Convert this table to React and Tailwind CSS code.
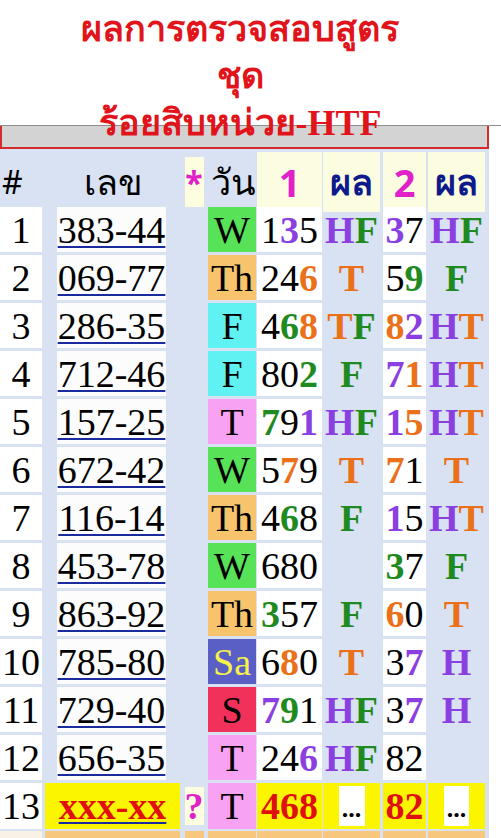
import React from "react";

// colour keys for digits / letters
const C = {
  k: "text-black",
  p: "text-[#8a3fe0]",
  g: "text-[#1f8a1f]",
  o: "text-[#ea7019]",
};

const DAY = {
  W: "bg-[#58e258] text-black",
  Th: "bg-[#f7c36c] text-black",
  F: "bg-[#60f2f2] text-black",
  T: "bg-[#f8a2f3] text-black",
  Sa: "bg-[#5a5fc6] text-[#f6f24a]",
  S: "bg-[#f2315a] text-black",
};

// each coloured text given as [char, colourKey] pairs
const rows = [
  { n: 1, num: "383-44", day: "W", a: "1k3p5k", r1: "HpFg", b: "3p7k", r2: "HpFg" },
  { n: 2, num: "069-77", day: "Th", a: "2k4k6o", r1: "To", b: "5k9g", r2: "Fg" },
  { n: 3, num: "286-35", day: "F", a: "4k6g8o", r1: "ToFg", b: "8o2p", r2: "HpTo" },
  { n: 4, num: "712-46", day: "F", a: "8k0k2g", r1: "Fg", b: "7p1o", r2: "HpTo" },
  { n: 5, num: "157-25", day: "T", a: "7g9k1p", r1: "HpFg", b: "1p5o", r2: "HpTo" },
  { n: 6, num: "672-42", day: "W", a: "5k7o9k", r1: "To", b: "7o1k", r2: "To" },
  { n: 7, num: "116-14", day: "Th", a: "4k6g8k", r1: "Fg", b: "1p5k", r2: "HpTo" },
  { n: 8, num: "453-78", day: "W", a: "6k8k0k", r1: "", b: "3g7k", r2: "Fg" },
  { n: 9, num: "863-92", day: "Th", a: "3g5k7k", r1: "Fg", b: "6o0k", r2: "To" },
  { n: 10, num: "785-80", day: "Sa", a: "6k8o0k", r1: "To", b: "3k7p", r2: "Hp" },
  { n: 11, num: "729-40", day: "S", a: "7p9g1k", r1: "HpFg", b: "3k7p", r2: "Hp" },
  { n: 12, num: "656-35", day: "T", a: "2k4k6p", r1: "HpFg", b: "8k2k", r2: "" },
];

const Colored = ({ spec, bold }) => {
  const parts = [];
  for (let i = 0; i < spec.length; i += 2) {
    parts.push(
      <span key={i} className={`${C[spec[i + 1]]} ${bold || spec[i + 1] !== "k" ? "font-bold" : ""}`}>
        {spec[i]}
      </span>
    );
  }
  return <>{parts}</>;
};

const serif = "font-['Liberation_Serif','DejaVu_Serif',serif]";
const thai = "font-['Noto_Sans','DejaVu_Sans',sans-serif]";

const grid = "grid grid-cols-[45px_137px_24px_51px_66px_59px_45px_62px]";

const App = () => {
  return (
    <div className="h-[838px] w-[501px] overflow-hidden bg-white">
      {/* title */}
      <div
        className={`relative z-10 w-[480px] pt-[6px] text-center text-[36px] font-bold leading-[47px] text-[#e0141a] ${serif}`}
      >
        <div>ผลการตรวจสอบสูตร</div>
        <div>ชุด</div>
        <div>ร้อยสิบหน่วย-HTF</div>
      </div>

      {/* grey bar */}
      <div className="-mt-[22px] border-t border-[#8e8e8e]">
        <div className="h-[23px] w-[489px] border-x-2 border-b-2 border-[#d42a2a] bg-[#d3d3d3]" />
      </div>

      {/* table */}
      <div className="flex w-[489px] flex-col gap-[3px] bg-[#d9e2f3] pb-4 pt-[3px]">
        {/* header */}
        <div className={`${grid} h-[52px]`}>
          <div className={`flex items-center pl-[2px] text-[32px] text-black ${thai}`}>#</div>
          <div className={`flex items-center justify-center text-[36px] text-black ${thai}`}>เลข</div>
          <div className="flex items-center justify-center py-[5px]">
            <div className={`flex h-full w-[19px] items-start justify-center bg-[#fdfde0] pt-[2px] text-[32px] font-bold text-[#e020c8] ${thai}`}>
              *
            </div>
          </div>
          <div className={`flex items-center justify-center pl-[4px] text-[36px] text-black ${thai}`}>วัน</div>
          <div className={`flex w-[65px] items-center justify-center bg-[#fcfce0] text-[38px] font-bold text-[#e020c8] ${thai}`}>
            1
          </div>
          <div className={`flex w-[57px] items-center justify-center bg-[#fcfce0] text-[36px] font-bold text-[#0d1a8c] ${thai}`}>
            ผล
          </div>
          <div className={`ml-[1px] flex w-[43px] items-center justify-center bg-[#fcfce0] text-[38px] font-bold text-[#e020c8] ${thai}`}>
            2
          </div>
          <div className={`ml-[1px] flex w-[57px] items-center justify-center bg-[#fcfce0] text-[36px] font-bold text-[#0d1a8c] ${thai}`}>
            ผล
          </div>
        </div>

        {rows.map((r) => (
          <div key={r.n} className={`${grid} h-[45px] text-[38px] leading-none ${serif}`}>
            <div className="flex w-[42px] items-center justify-center bg-white">{r.n}</div>
            <div className="ml-[12px] flex w-[109px] items-center justify-center bg-[#fcfcfc]">
              <span className="underline decoration-[#1b2b9e] decoration-2 underline-offset-[3px]">{r.num}</span>
            </div>
            <div />
            <div className={`ml-[2px] flex w-[48px] items-center justify-center ${DAY[r.day]}`}>{r.day}</div>
            <div className="flex w-[65px] items-center justify-center bg-white">
              <Colored spec={r.a} />
            </div>
            <div className="flex w-[57px] items-center justify-center">
              <Colored spec={r.r1} bold />
            </div>
            <div className="ml-[1px] flex w-[43px] items-center justify-center bg-white">
              <Colored spec={r.b} />
            </div>
            <div className="ml-[1px] flex w-[57px] items-center justify-center">
              <Colored spec={r.r2} bold />
            </div>
          </div>
        ))}

        {/* row 13 - pending */}
        <div className={`${grid} h-[45px] text-[38px] leading-none ${serif}`}>
          <div className="flex w-[42px] items-center justify-center bg-white">13</div>
          <div className="flex w-[135px] items-center justify-center bg-[#fbf600]">
            <span className="font-bold text-[#e01010] underline decoration-[#1b2b9e] decoration-2 underline-offset-[3px]">
              xxx-xx
            </span>
          </div>
          <div className="flex items-center justify-center py-[4px]">
            <div className="flex h-full w-[19px] items-center justify-center bg-[#fdfde0] text-[38px] font-bold text-[#e020c8]">
              ?
            </div>
          </div>
          <div className={`ml-[2px] flex w-[48px] items-center justify-center ${DAY.T}`}>T</div>
          <div className="flex w-[65px] items-center justify-center bg-[#fbf600] font-bold text-[#e01010]">468</div>
          <div className="flex w-[57px] items-center justify-center bg-[#fbf600] py-[3px]">
            <div className="flex h-full w-[26px] items-end justify-center bg-white pb-[4px] text-[26px] font-bold">...</div>
          </div>
          <div className="ml-[1px] flex w-[43px] items-center justify-center bg-[#fbf600] font-bold text-[#e01010]">82</div>
          <div className="ml-[1px] flex w-[57px] items-center justify-center bg-[#fbf600] py-[3px]">
            <div className="flex h-full w-[25px] items-end justify-center bg-white pb-[4px] text-[26px] font-bold">...</div>
          </div>
        </div>

        {/* next row, cut off */}
        <div className={`${grid} h-[45px]`}>
          <div className="w-[42px] bg-[#f7f1e6]" />
          <div className="w-[135px] bg-[#f7c77d]" />
          <div className="flex justify-center">
            <div className="w-[19px] bg-[#f7c77d]" />
          </div>
          <div className="ml-[2px] w-[48px] bg-[#f7c77d]" />
          <div className="w-[65px] bg-[#f7c77d]" />
          <div className="w-[57px] bg-[#f7c77d]" />
          <div className="ml-[1px] w-[43px] bg-[#f7c77d]" />
          <div className="ml-[1px] w-[57px] bg-[#f7c77d]" />
        </div>
      </div>
    </div>
  );
};

export default App;
